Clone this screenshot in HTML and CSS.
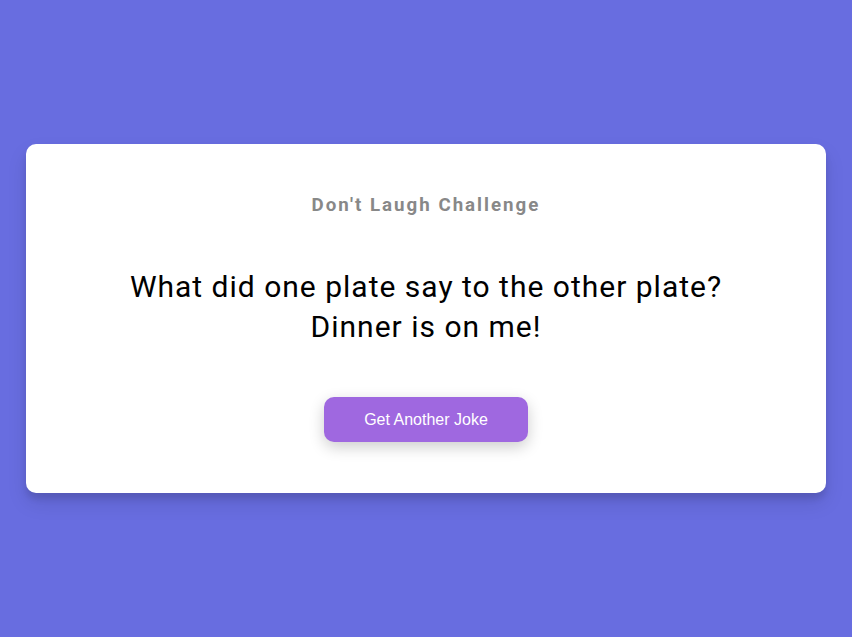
FILE: index.html
```html
<!DOCTYPE html>
<html lang="en">
<head>
<meta charset="UTF-8">
<title>Don't Laugh Challenge</title>
<link rel="stylesheet" href="styles.css">
</head>
<body>
<div class="container">
  <h3 class="title">Don't Laugh Challenge</h3>
  <div class="joke">What did one plate say to the other plate?<br>Dinner is on me!</div>
  <button class="btn">Get Another Joke</button>
</div>
</body>
</html>
```
FILE: styles.css
```css
* { box-sizing: border-box; }
html, body { margin: 0; padding: 0; }
body {
  background: #686de0;
  font-family: Roboto, "Liberation Sans", sans-serif;
  height: 637px;
  display: flex;
  align-items: center;
  justify-content: center;
  overflow: hidden;
}
.container {
  background: #fff;
  border-radius: 10px;
  box-shadow: 0 10px 20px rgba(0,0,0,0.1), 0 6px 6px rgba(0,0,0,0.1);
  width: 800px;
  padding: 51px 20px 51px;
  text-align: center;
  display: flex;
  flex-direction: column;
  align-items: center;
}
.title {
  margin: 0;
  font-size: 18.72px;
  line-height: 21px;
  font-weight: 700;
  letter-spacing: 2px;
  color: #888;
}
.joke {
  margin: 51px 0 50px;
  font-size: 30px;
  line-height: 40px;
  letter-spacing: 1px;
  color: #000;
}
.btn {
  background: #9f68e0;
  color: #fff;
  border: 0;
  border-radius: 10px;
  width: 204px;
  height: 45px;
  font-family: "Liberation Sans", Arial, sans-serif;
  font-size: 16px;
  box-shadow: 0 5px 15px rgba(0,0,0,0.2);
  cursor: pointer;
}
```
